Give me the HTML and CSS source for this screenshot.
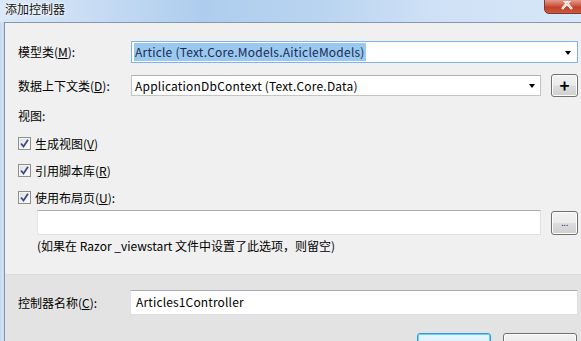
FILE: index.html
```html
<!DOCTYPE html>
<html>
<head>
<meta charset="utf-8">
<link rel="stylesheet" href="styles.css">
</head>
<body>
<div class="window">
  <div class="titlebar">
    <span class="title">添加控制器</span>
    <div class="close-btn">
      <svg width="20" height="9" viewBox="0 0 20 9"><path d="M5 -3 L15 8 M15 -3 L5 8" stroke="#fff" stroke-width="2.6" fill="none"/><path d="M5 -3 L15 8 M15 -3 L5 8" stroke="#5a2a22" stroke-width="0.6" fill="none" opacity="0.4"/></svg>
    </div>
  </div>
  <div class="frame">
    <div class="frame-edge"></div>
    <div class="client">
      <div class="top-area">
        <div class="row row-model">
          <label class="lbl">模型类(<u>M</u>):</label>
          <div class="combo combo-focus">
            <span class="sel">Article (Text.Core.Models.AiticleModels)</span>
            <span class="arrow"></span>
          </div>
        </div>
        <div class="row row-ctx">
          <label class="lbl">数据上下文类(<u>D</u>):</label>
          <div class="combo">
            <span class="val">ApplicationDbContext (Text.Core.Data)</span>
            <span class="arrow"></span>
          </div>
          <div class="btn small-btn plus">+</div>
        </div>
        <div class="section-label">视图:</div>
        <div class="check-row first">
          <span class="checkbox"><svg width="9" height="9" viewBox="0 0 9 9"><path d="M1 4.5 L3.5 7.5 L8 0.8" stroke="#3b4a8c" stroke-width="1.8" fill="none"/></svg></span>
          <span>生成视图(<u>V</u>)</span>
        </div>
        <div class="check-row">
          <span class="checkbox"><svg width="9" height="9" viewBox="0 0 9 9"><path d="M1 4.5 L3.5 7.5 L8 0.8" stroke="#3b4a8c" stroke-width="1.8" fill="none"/></svg></span>
          <span>引用脚本库(<u>R</u>)</span>
        </div>
        <div class="check-row">
          <span class="checkbox"><svg width="9" height="9" viewBox="0 0 9 9"><path d="M1 4.5 L3.5 7.5 L8 0.8" stroke="#3b4a8c" stroke-width="1.8" fill="none"/></svg></span>
          <span>使用布局页(<u>U</u>):</span>
        </div>
        <div class="layout-row">
          <div class="textbox layout-box"></div>
          <div class="btn small-btn dots">...</div>
        </div>
        <div class="hint">(如果在 Razor _viewstart 文件中设置了此选项，则留空)</div>
      </div>
      <div class="bottom-area">
        <div class="row row-name">
          <label class="lbl lbl-name">控制器名称(<u>C</u>):</label>
          <div class="textbox name-box">Articles1Controller</div>
        </div>
        <div class="buttons">
          <div class="btn big-btn ok"></div>
          <div class="btn big-btn"></div>
        </div>
      </div>
    </div>
  </div>
</div>
</body>
</html>
```
FILE: styles.css
```css
* { box-sizing: border-box; }
html, body { margin: 0; padding: 0; }
body {
  width: 581px;
  height: 341px;
  overflow: hidden;
  font-family: "Noto Sans CJK SC", "Noto Sans", sans-serif;
  font-size: 12px;
  color: #000;
  background: #cfe0f4;
}
u { text-decoration: underline; text-underline-offset: 1px; }

.window { width: 581px; height: 341px; display: flex; flex-direction: column; }

.titlebar {
  position: relative;
  height: 22px;
  flex: none;
  background: linear-gradient(90deg, #dbe9f9 0%, #c9ddf4 15%, #aecdee 35%, #b9d4f0 55%, #cfe1f6 75%, #d7e7f9 100%);
  display: flex;
  align-items: flex-start;
}
.title {
  margin-left: 5px;
  margin-top: 1px;
  line-height: 16px;
  font-size: 12px;
  color: #111;
  text-shadow: 0 0 5px #fff, 0 0 3px #fff;
}
.close-btn {
  position: absolute;
  left: 544px;
  top: -2px;
  width: 44px;
  height: 16px;
  border: 1px solid #7c3a30;
  border-radius: 0 0 5px 5px;
  background: linear-gradient(180deg, #e8a497 0%, #d4705c 35%, #c1412a 60%, #cd5a3c 100%);
  display: flex;
  justify-content: center;
  padding-left: 2px;
}
.close-btn svg { margin-top: 2px; }

.frame { flex: 1; display: flex; }
.frame-edge {
  width: 4px;
  flex: none;
  background: linear-gradient(90deg, #c3d7ef 0%, #d5e4f6 60%, #bcd0e8 100%);
}
.client {
  flex: 1;
  display: flex;
  flex-direction: column;
  border-left: 1px solid #8696ab;
  border-top: 1px solid #8696ab;
  background: #f0f0f0;
}

.top-area {
  padding: 18px 3px 0 13px;
  height: 252px;
  flex: none;
  border-bottom: 1px solid #dcdcdc;
}
.row { display: flex; align-items: center; }
.lbl { width: 113px; flex: none; line-height: 16px; }
.row-model { height: 22px; }
.row-ctx { height: 23px; margin-top: 11px; }

.combo {
  flex: 1;
  height: 22px;
  display: flex;
  align-items: center;
  background: #fff;
  border: 1px solid #c5c5c5;
  border-top-color: #b0b0b0;
  padding-left: 3px;
  position: relative;
}
.row-ctx .combo { height: 21px; }
.combo-focus { border-color: #7eb4ea; }
.sel {
  background: #99c9ef;
  line-height: 18px;
  padding: 0 1px;
  margin-left: -1px;
  color: #1e2a55;
  letter-spacing: 0.22px;
}
.val { line-height: 18px; letter-spacing: 0.2px; }
.arrow {
  position: absolute;
  right: 6px;
  top: 9px;
  width: 0; height: 0;
  border-left: 3.5px solid transparent;
  border-right: 3.5px solid transparent;
  border-top: 4px solid #000;
}
.row-ctx .arrow { right: 5px; top: 8px; }

.btn {
  border: 1px solid #707070;
  border-radius: 3px;
  background: linear-gradient(180deg, #f2f2f2 0%, #ebebeb 48%, #dddddd 52%, #cfcfcf 100%);
  display: flex;
  align-items: center;
  justify-content: center;
  box-shadow: inset 0 0 0 1px #fcfcfc;
}
.small-btn { width: 27px; flex: none; margin-left: 10px; }
.plus { height: 23px; font-size: 17px; font-weight: bold; line-height: 1; padding-bottom: 2px; }

.section-label { margin-top: 11px; line-height: 16px; }

.check-row {
  display: flex;
  align-items: center;
  height: 17px;
  margin-top: 10px;
  line-height: 16px;
}
.check-row.first { margin-top: 11px; }
.checkbox {
  width: 13px;
  height: 13px;
  border: 1px solid #8e8f8f;
  background: linear-gradient(135deg, #dcdcdc 0%, #f4f4f4 60%, #fff 100%);
  box-shadow: inset 0 0 0 1px #f4f4f4;
  margin-right: 4px;
  display: flex;
  align-items: center;
  justify-content: center;
  flex: none;
}

.layout-row { display: flex; margin-top: 4px; margin-left: 19px; align-items: flex-start; }
.textbox {
  background: #fff;
  border: 1px solid #dbdfe6;
  border-top-color: #abadb3;
  border-left-color: #e2e3ea;
}
.layout-box { flex: 1; height: 25px; }
.dots { height: 24px; margin-top: 1px; font-size: 10px; color: #1b3c8a; letter-spacing: -0.5px; padding-bottom: 3px; }

.hint { margin-top: 3px; margin-left: 19px; line-height: 16px; }

.bottom-area {
  flex: 1;
  background: #e3e3e3;
  padding: 15px 3px 0 13px;
}
.row-name { height: 25px; }
.lbl-name { width: 112px; }
.name-box { flex: 1; height: 25px; line-height: 22px; padding-left: 5px; letter-spacing: 0.15px; }

.buttons { display: flex; justify-content: flex-end; gap: 12px; margin-top: 18px; padding-right: 1px; }
.big-btn { width: 74px; height: 23px; }
.ok {
  border-color: #3399dd;
  background: linear-gradient(180deg, #eaf6fd 0%, #d9f0fc 50%, #bee6fd 52%, #a7d9f5 100%);
  box-shadow: inset 0 0 0 1px #6ad0f8;
}
```
